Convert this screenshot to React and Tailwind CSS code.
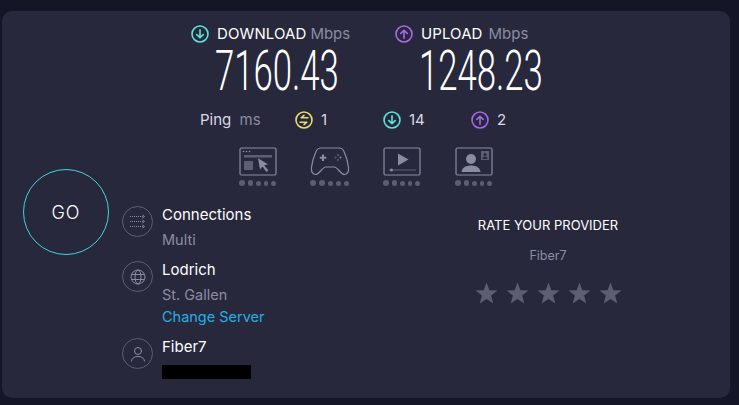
const F = { fontFamily: '"Inter","Noto Sans",sans-serif' };

function ArrowCircle({ color, dir }) {
  return (
    <svg width="18" height="18" viewBox="0 0 18 18" fill="none" stroke={color} strokeWidth="1.6" strokeLinecap="round" strokeLinejoin="round">
      <circle cx="9" cy="9" r="8" />
      {dir === "down" ? <path d="M9 4.8v8M5.8 9.6 9 12.8l3.2-3.2" /> : <path d="M9 13.2v-8M5.8 8.4 9 5.2l3.2 3.2" />}
    </svg>
  );
}
function PingIcon() {
  return (
    <svg width="18" height="18" viewBox="0 0 18 18" fill="none" stroke="#e6dc6e" strokeWidth="1.6" strokeLinecap="round" strokeLinejoin="round">
      <circle cx="9" cy="9" r="8" />
      <path d="M13 6.8H6.2L9 4.4M5 11.2h6.8L9 13.6" />
    </svg>
  );
}
function Dots() {
  return (
    <div className="flex items-center justify-center gap-[2px] mt-[4px]">
      {[6, 6, 5, 5, 5].map((s, i) => (
        <span key={i} className="rounded-full bg-[#5c5e72] block" style={{ width: s, height: s, marginRight: 1 }} />
      ))}
    </div>
  );
}
const IC = "#8a8ca3";
function Web() {
  return (
    <svg width="38" height="29" viewBox="0 0 38 29" fill="none">
      <rect x="1" y="1" width="36" height="27" rx="1.5" stroke={IC} strokeWidth="1.2" />
      <circle cx="4.5" cy="4.5" r="0.8" fill={IC} /><circle cx="7.5" cy="4.5" r="0.8" fill={IC} /><circle cx="10.5" cy="4.5" r="0.8" fill={IC} />
      <rect x="5" y="8" width="28" height="2.6" fill="#5c5e72" />
      <rect x="5" y="14" width="9" height="9" rx="0.5" fill="#5c5e72" />
      <path d="M18.5 10.5 30 17.5l-4.2 1 4 5-2.6 1.8-3.6-5.2-3 3z" fill={IC} stroke="#27283c" strokeWidth="0.8" />
    </svg>
  );
}
function Game() {
  return (
    <svg width="40" height="29" viewBox="0 0 40 29" fill="none">
      <path d="M11 1h18c2.500 0 4 1.200 5 3.500 2 4.500 4 11 4.500 16 .3 3.500-.8 6.500-3.800 7-3.500.5-6.500-6.500-10-7.500H15.300c-3.500 1-6.500 8-10 7.500-3-.5-4.100-3.500-3.800-7 .5-5 2.500-11.500 4.500-16C7 2.200 8.500 1 11 1Z" stroke={IC} strokeWidth="1.2" />
      <path d="M13 7.500v6.500M9.800 10.700h6.500" stroke={IC} strokeWidth="2" />
      <circle cx="28" cy="8" r="1" fill="#5c5e72" /><circle cx="28" cy="13" r="1" fill="#5c5e72" />
      <circle cx="25.500" cy="10.500" r="1" fill="#5c5e72" /><circle cx="30.500" cy="10.500" r="1" fill={IC} />
    </svg>
  );
}
function Video() {
  return (
    <svg width="38" height="29" viewBox="0 0 38 29" fill="none">
      <rect x="1" y="1" width="36" height="27" rx="1.5" stroke={IC} strokeWidth="1.2" />
      <path d="M15 6.500 25.500 12.500 15 18.500z" fill={IC} />
      <path d="M6 23h27" stroke="#5c5e72" strokeWidth="1" />
      <circle cx="8.500" cy="23" r="1.500" fill={IC} />
    </svg>
  );
}
function Person() {
  return (
    <svg width="38" height="29" viewBox="0 0 38 29" fill="none">
      <rect x="1" y="1" width="36" height="27" rx="1.5" stroke={IC} strokeWidth="1.2" />
      <circle cx="16" cy="12" r="5" fill={IC} />
      <path d="M6.500 25c.5-4.500 4.500-6.500 9.500-6.500s9 2 9.500 6.500z" fill={IC} />
      <rect x="26" y="4" width="8" height="9" fill="#5c5e72" />
      <circle cx="30" cy="7.500" r="1.500" fill="#27283c" />
      <path d="M27.500 12c.3-1.800 1.200-2.500 2.500-2.500s2.200.7 2.500 2.500z" fill="#27283c" />
    </svg>
  );
}
function RowIcon({ children }) {
  return (
    <div className="w-[31px] h-[31px] rounded-full border border-[#5c5e72] flex items-center justify-center shrink-0">
      {children}
    </div>
  );
}
function Star() {
  return (
    <svg width="23" height="22" viewBox="0 0 24 23">
      <path d="M12 0.500 15 8.600l8.500.3-6.700 5.300 2.300 8.300L12 17.700l-7.100 4.800 2.300-8.300L.5 8.900 9 8.600z" fill="#5c5e72" />
    </svg>
  );
}
function Speed({ icon, label, value, w, gap }) {
  return (
    <div className={w}>
      <div className="flex items-center h-[18px]">
        {icon}
        <span className="ml-2 text-[15px] leading-[18px] text-white tracking-[0.1px]">{label}</span>
        <span className={`${gap} text-[15px] leading-[18px] text-[#8a8ca3]`}>Mbps</span>
      </div>
      <div
        className="h-[48px] mt-[4px] ml-[24px] text-[56px] leading-[48px] text-white font-light origin-left scale-x-[0.62] whitespace-nowrap"
        style={{ fontFamily: 'Roboto,sans-serif' }}
      >
        {value}
      </div>
    </div>
  );
}
function Ping({ icon, value, w }) {
  return (
    <div className={`flex items-center gap-2 ${w}`}>
      {icon}
      <span className="text-[15px] text-[#d9dae3]">{value}</span>
    </div>
  );
}

export default function App() {
  return (
    <div className="w-[739px] h-[405px] bg-[#141526] pt-[11px] pl-[2px] overflow-hidden" style={F}>
      <div className="w-[728px] h-[387px] rounded-[10px] bg-[#27283c] flex">
        <div className="w-[120px] shrink-0 pt-[158px] pl-[21px]">
          <div className="w-[86px] h-[86px] rounded-full border border-[#3fd5d8] flex items-center justify-center text-white text-[18px] font-light tracking-[1px]">
            GO
          </div>
        </div>
        <div className="flex-1 flex flex-col">
          <div className="flex pl-[69px] pt-[14px]">
            <Speed w="w-[204px]" gap="ml-1" icon={<ArrowCircle color="#5fe3d9" dir="down" />} label="DOWNLOAD" value="7160.43" />
            <Speed w="w-[200px]" gap="ml-[6px]" icon={<ArrowCircle color="#a868e6" dir="up" />} label="UPLOAD" value="1248.23" />
          </div>
          <div className="flex items-center pl-[78px] mt-[16px] h-[18px]">
            <div className="w-[95px] text-[15px] text-[#d9dae3]">
              Ping <span className="ml-1 text-[#8a8ca3]">ms</span>
            </div>
            <Ping w="w-[88px]" icon={<PingIcon />} value="1" />
            <Ping w="w-[88px]" icon={<ArrowCircle color="#5fe3d9" dir="down" />} value="14" />
            <Ping w="w-[60px]" icon={<ArrowCircle color="#a868e6" dir="up" />} value="2" />
          </div>
          <div className="flex pl-[117px] mt-[18px]">
            <div className="w-[71px]"><Web /><div className="w-[38px]"><Dots /></div></div>
            <div className="w-[73px]"><Game /><div className="w-[40px]"><Dots /></div></div>
            <div className="w-[72px]"><Video /><div className="w-[38px]"><Dots /></div></div>
            <div className="w-[38px]"><Person /><Dots /></div>
          </div>
          <div className="flex mt-[20px]">
            <div className="w-[326px] text-[14.5px]">
              <div className="flex gap-[9px] h-[55px]">
                <RowIcon>
                  <svg width="17" height="15" viewBox="0 0 17 15" fill="none" stroke="#8a8ca3" strokeWidth="1" strokeDasharray="1 1">
                    <path d="M1 2.500h14M1 7.500h14M1 12.500h14" />
                    <path d="M13.500 1 15.500 2.500l-2 1.500M13.500 6l2 1.500-2 1.500M13.500 11l2 1.500-2 1.500" strokeDasharray="none" />
                  </svg>
                </RowIcon>
                <div>
                  <div className="text-white text-[15px] leading-[18px]">Connections</div>
                  <div className="text-[#8a8ca3] leading-[18px] mt-[7px]">Multi</div>
                </div>
              </div>
              <div className="flex gap-[9px] h-[77px]">
                <RowIcon>
                  <svg width="16" height="16" viewBox="0 0 16 16" fill="none" stroke="#8a8ca3" strokeWidth="1">
                    <circle cx="8" cy="8" r="7" />
                    <ellipse cx="8" cy="8" rx="3" ry="7" />
                    <path d="M1.500 5.500h13M1.500 10.500h13" />
                  </svg>
                </RowIcon>
                <div>
                  <div className="text-white text-[15px] leading-[18px]">Lodrich</div>
                  <div className="text-[#8a8ca3] leading-[18px] mt-[7px]">St. Gallen</div>
                  <div className="text-[#27aee6] leading-[18px] mt-[4px]">Change Server</div>
                </div>
              </div>
              <div className="flex gap-[9px]">
                <RowIcon>
                  <svg width="16" height="16" viewBox="0 0 16 16" fill="none" stroke="#8a8ca3" strokeWidth="1" strokeLinecap="round">
                    <circle cx="8" cy="5" r="3.500" />
                    <path d="M1.500 15c.3-3 3-4.500 6.500-4.500s6.200 1.500 6.500 4.500" />
                  </svg>
                </RowIcon>
                <div>
                  <div className="text-white text-[15px] leading-[18px]">Fiber7</div>
                  <div className="w-[89px] h-[14px] bg-black mt-[9px]" />
                </div>
              </div>
            </div>
            <div className="w-[200px] flex flex-col items-center">
              <div className="text-white text-[13px] leading-[16px] mt-[11px] whitespace-nowrap">RATE YOUR PROVIDER</div>
              <div className="text-[#8a8ca3] text-[12.5px] leading-[16px] mt-[15px]">Fiber7</div>
              <div className="flex gap-[8px] mt-[18px]">
                <Star /><Star /><Star /><Star /><Star />
              </div>
            </div>
          </div>
        </div>
      </div>
    </div>
  );
}
